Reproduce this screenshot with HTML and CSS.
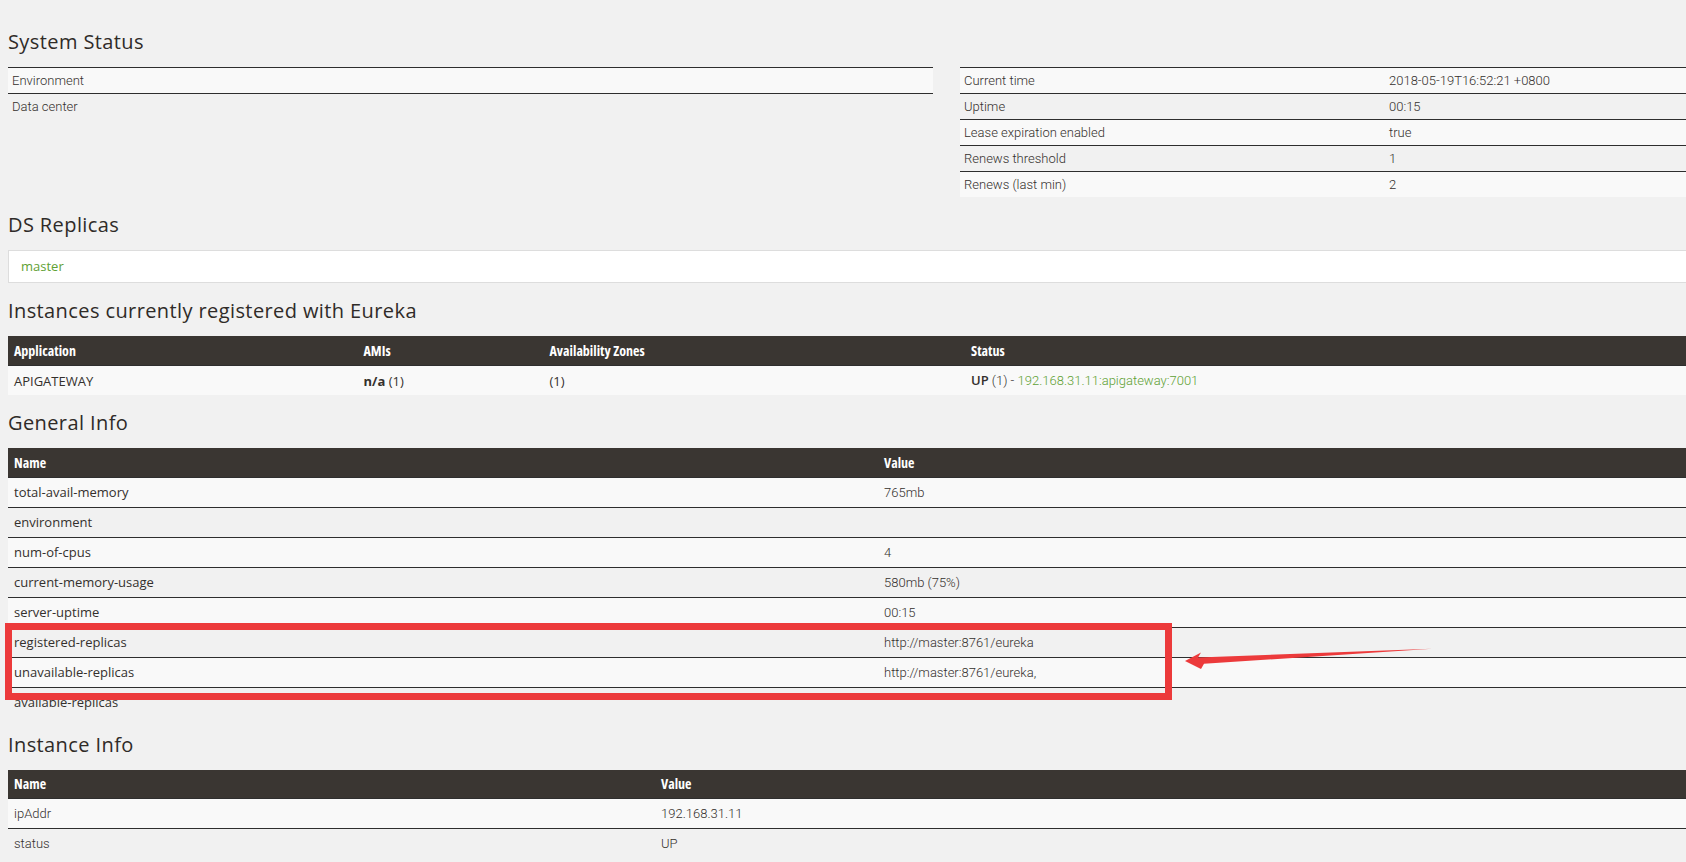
FILE: index.html
```html
<!DOCTYPE html>
<html lang="en">
<head>
<meta charset="utf-8">
<title>Eureka</title>
<link rel="stylesheet" href="styles.css">
</head>
<body>
<div class="page">
  <h2 class="title">System Status</h2>
  <div class="status-row">
    <table class="status-table">
      <colgroup><col class="c-env"><col></colgroup>
      <tbody>
        <tr class="odd"><td>Environment</td><td></td></tr>
        <tr><td>Data center</td><td></td></tr>
      </tbody>
    </table>
    <table class="status-table">
      <colgroup><col class="c-stat"><col></colgroup>
      <tbody>
        <tr class="odd"><td>Current time</td><td>2018-05-19T16:52:21 +0800</td></tr>
        <tr><td>Uptime</td><td>00:15</td></tr>
        <tr class="odd"><td>Lease expiration enabled</td><td>true</td></tr>
        <tr><td>Renews threshold</td><td>1</td></tr>
        <tr class="odd"><td>Renews (last min)</td><td>2</td></tr>
      </tbody>
    </table>
  </div>

  <h2 class="title">DS Replicas</h2>
  <ul class="replicas">
    <li class="replica"><a class="link" href="#">master</a></li>
  </ul>

  <h2 class="title">Instances currently registered with Eureka</h2>
  <table class="data-table instances">
    <colgroup><col class="c-app"><col class="c-ami"><col class="c-zone"><col></colgroup>
    <thead>
      <tr><th>Application</th><th>AMIs</th><th>Availability Zones</th><th>Status</th></tr>
    </thead>
    <tbody>
      <tr class="odd">
        <td class="geo">APIGATEWAY</td>
        <td class="geo"><b>n/a</b> (1)</td>
        <td class="geo">(1)</td>
        <td class="thin"><b class="up">UP</b> (1) - <a class="link" href="#">192.168.31.11:apigateway:7001</a></td>
      </tr>
    </tbody>
  </table>

  <h2 class="title">General Info</h2>
  <table class="data-table general">
    <colgroup><col class="c-gname"><col></colgroup>
    <thead>
      <tr><th>Name</th><th>Value</th></tr>
    </thead>
    <tbody>
      <tr class="odd"><td class="geo">total-avail-memory</td><td class="thin">765mb</td></tr>
      <tr><td class="geo">environment</td><td class="thin"></td></tr>
      <tr class="odd"><td class="geo">num-of-cpus</td><td class="thin">4</td></tr>
      <tr><td class="geo">current-memory-usage</td><td class="thin">580mb (75%)</td></tr>
      <tr class="odd"><td class="geo">server-uptime</td><td class="thin">00:15</td></tr>
      <tr><td class="geo">registered-replicas</td><td class="thin">http://master:8761/eureka</td></tr>
      <tr class="odd"><td class="geo">unavailable-replicas</td><td class="thin">http://master:8761/eureka,</td></tr>
      <tr><td class="geo">available-replicas</td><td class="thin"></td></tr>
    </tbody>
  </table>

  <h2 class="title">Instance Info</h2>
  <table class="data-table instance-info">
    <colgroup><col class="c-iname"><col></colgroup>
    <thead>
      <tr><th>Name</th><th>Value</th></tr>
    </thead>
    <tbody>
      <tr class="odd"><td class="thin">ipAddr</td><td class="thin">192.168.31.11</td></tr>
      <tr><td class="thin">status</td><td class="thin">UP</td></tr>
    </tbody>
  </table>
</div>

<svg class="annotation" width="1686" height="862" viewBox="0 0 1686 862" aria-hidden="true">
  <rect x="8.5" y="626.5" width="1160" height="70" fill="none" stroke="#ec3a3b" stroke-width="7"/>
  <polygon fill="#ec3a3b" points="1185,661 1201,652.5 1198,657.5 1432,648.8 1204,663.8 1201,669"/>
</svg>
</body>
</html>
```

FILE: styles.css
```css
html {
  overflow: hidden;
  background: #f1f1f1;
}

body {
  margin: 0;
  background: #f1f1f1;
  color: #34302d;
  font-family: "Open Sans", "Liberation Sans", sans-serif;
  font-size: 13px;
}

.page {
  width: 1877px;
  padding: 14px 8px 0;
}

.title {
  margin: 17px 0 14px;
  font-family: "Open Sans", "Liberation Sans", sans-serif;
  font-size: 20px;
  font-weight: 500;
  letter-spacing: 0.4px;
  line-height: 22px;
  color: #2f2b28;
}

/* System status */
.status-row {
  display: flex;
  gap: 27px;
  align-items: flex-start;
}

.status-table {
  flex: 0 0 925px;
  width: 925px;
  border-collapse: separate;
  border-spacing: 0;
  table-layout: fixed;
  font-family: Roboto, "Liberation Sans", sans-serif;
  font-weight: 300;
  font-size: 13px;
  color: #34302d;
}

.status-table td {
  border-top: 1px solid #2e2e2e;
  line-height: 25px;
  padding: 0 4px;
  white-space: nowrap;
}

.c-env { width: 460px; }
.c-stat { width: 425px; }

tr.odd td {
  background: #f9f9f9;
}

/* DS replicas */
.replicas {
  list-style: none;
  margin: 0;
  padding: 0;
}

.replica {
  background: #fff;
  border: 1px solid #dddddd;
  line-height: 31px;
  padding: 0 12px;
  font-family: "Open Sans", "Liberation Sans", sans-serif;
  font-size: 13px;
}

.link {
  color: #5fa134;
  text-decoration: none;
}

/* data tables */
.data-table {
  width: 100%;
  border-collapse: separate;
  border-spacing: 0;
  table-layout: fixed;
}

.data-table th {
  background: #3a3632;
  color: #ffffff;
  text-align: left;
  font-family: "Open Sans", "Liberation Sans", sans-serif;
  font-stretch: 75%;
  font-weight: 700;
  font-size: 14px;
  line-height: 29px;
  padding: 0 6px;
}

.data-table td {
  border-top: 1px solid #2e2e2e;
  padding: 0 6px;
  line-height: 29px;
  white-space: nowrap;
}

.instances td { line-height: 28px; }
.instance-info th { line-height: 28px; }

.geo {
  font-family: "Open Sans", "Liberation Sans", sans-serif;
  font-size: 13px;
  font-weight: 400;
}

.thin {
  font-family: Roboto, "Liberation Sans", sans-serif;
  font-size: 13px;
  font-weight: 300;
}

.thin .up {
  font-family: "Open Sans", "Liberation Sans", sans-serif;
  font-weight: 600;
}

.c-app { width: 349.5px; }
.c-ami { width: 186px; }
.c-zone { width: 421.5px; }
.c-gname { width: 870px; }
.c-iname { width: 647px; }

/* annotation overlay */
.annotation {
  position: absolute;
  left: 0;
  top: 0;
  pointer-events: none;
}
```
